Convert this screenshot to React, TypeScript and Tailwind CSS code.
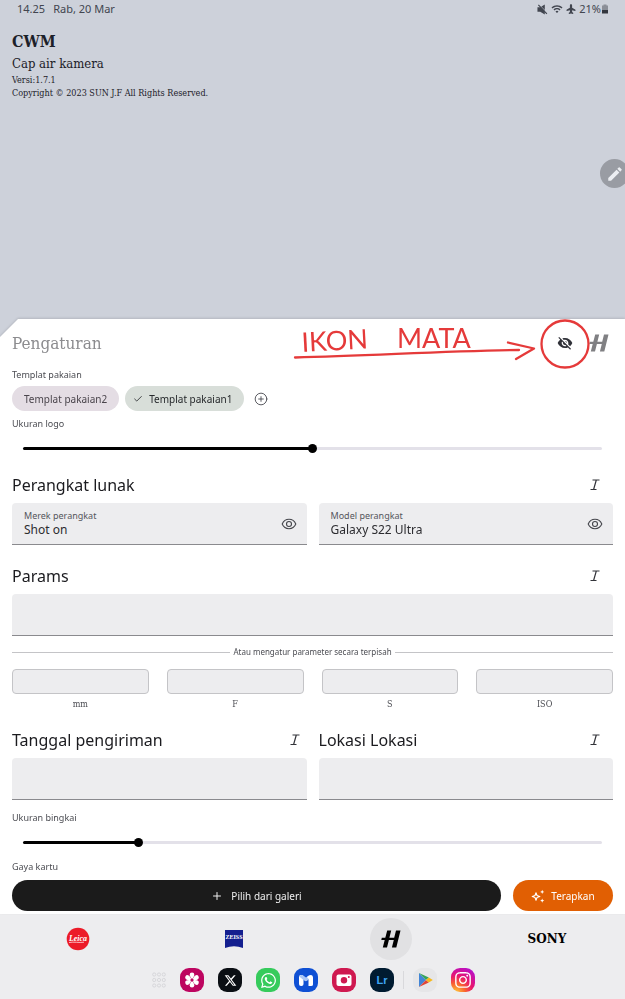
import { useState } from 'react';
import type { ReactNode } from 'react';
import { Check, CirclePlus, Plus } from 'lucide-react';
import { FaInstagram, FaPlane, FaWhatsapp, FaXTwitter } from 'react-icons/fa6';
import { MdModeEdit, MdVisibilityOff, MdWifi } from 'react-icons/md';

const templates = ['Templat pakaian2', 'Templat pakaian1'];

const params = ['mm', 'F', 'S', 'ISO'];

function EyeIcon() {
  return (
    <svg viewBox="0 0 16 16" className="w-4 h-4" fill="none" stroke="currentColor" strokeWidth="1.1">
      <path d="M1.2 8C2.5 5 5 3.3 8 3.3S13.500 5 14.800 8C13.500 11 11 12.700 8 12.700S2.500 11 1.200 8Z" />
      <circle cx="8" cy="8" r="2.500" />
    </svg>
  );
}

function ItalicIcon() {
  return (
    <svg viewBox="0 0 16 16" className="w-4 h-4" fill="none" stroke="currentColor" strokeWidth="1.2">
      <path d="M5.500 3h7M3.500 12.500h6M9.300 3L6.600 12.500" />
    </svg>
  );
}

function SparkleIcon() {
  return (
    <svg viewBox="0 0 14 14" className="w-3.5 h-3.5">
      <path
        d="M5 3.700L6 6.500L8.800 7.500L6 8.500L5 11.300L4 8.500L1.200 7.500L4 6.500Z"
        fill="none"
        stroke="currentColor"
        strokeWidth="1.1"
        strokeLinejoin="round"
      />
      <path
        d="M11.200 0.800L11.800 2.300L13.300 2.900L11.800 3.500L11.200 5L10.600 3.500L9.100 2.900L10.600 2.300ZM11.200 9.500L11.800 11L13.300 11.600L11.800 12.200L11.200 13.700L10.600 12.200L9.100 11.600L10.600 11Z"
        fill="currentColor"
      />
    </svg>
  );
}

function MuteIcon() {
  return (
    <svg viewBox="0 0 12 12" className="w-[11px] h-[11px]">
      <path d="M0.500 3.500H3.500L8.500 0.500V11.500L3.500 8.500H0.500Z" fill="currentColor" />
      <path d="M2.300 0.700L11.500 10" stroke="#cdd1da" strokeWidth="1" />
      <path d="M1.500 1L10.800 10.800" stroke="currentColor" strokeWidth="1.300" />
    </svg>
  );
}

function HasselbladLogo() {
  return (
    <svg viewBox="0 0 20 18" className="w-5 h-[18px]" fill="currentColor">
      <path d="M6.200 0.500H10.200L8.400 7.800H13.200L15 0.500H19.500L15.300 17.500H10.900L12.800 10H7.900L6 17.500H1.800L3.700 10H0.300L0.800 7.800H4.300Z" />
    </svg>
  );
}

function ItalicButton({ label, flush }: { label: string; flush?: boolean }) {
  return (
    <button
      aria-label={`Miring ${label}`}
      className={`w-6 h-6 flex items-center justify-center text-[#33343a] ${flush ? '' : 'mr-1.5'}`}
    >
      <ItalicIcon />
    </button>
  );
}

function SectionHeader({ id, children, flush }: { id: string; children: string; flush?: boolean }) {
  return (
    <div className="h-6 flex items-center justify-between">
      <h2 id={id} className="text-base leading-6 text-[#1b1b1f]">
        {children}
      </h2>
      <ItalicButton label={children} flush={flush} />
    </div>
  );
}

function DeviceField({ id, label, initial }: { id: string; label: string; initial: string }) {
  const [value, setValue] = useState(initial);

  return (
    <div className="h-[42px] flex items-center bg-[#ededef] border-b border-[#8a8a8e] rounded-t-sm pl-3">
      <div className="flex-1 min-w-0 flex flex-col">
        <label htmlFor={id} className="text-[9px] leading-3 text-[#55565c]">
          {label}
        </label>
        <input
          id={id}
          value={value}
          onChange={(e) => setValue(e.target.value)}
          className="w-full h-4 bg-transparent text-xs leading-4 text-[#2c2c30] outline-none"
        />
      </div>
      <button
        aria-label={`Tampilkan ${label}`}
        className="w-6 h-6 mr-1.5 flex items-center justify-center text-[#44454b]"
      >
        <EyeIcon />
      </button>
    </div>
  );
}

function TextField({ labelledBy }: { labelledBy: string }) {
  return (
    <input
      aria-labelledby={labelledBy}
      className="block w-full h-[42px] mt-1.5 px-3 bg-[#ededef] border-b border-[#8a8a8e] rounded-t-sm text-xs outline-none"
    />
  );
}

function SizeSlider({ id, label, initial }: { id: string; label: string; initial: number }) {
  const [value, setValue] = useState(initial);
  const percent = value / 2;

  return (
    <div>
      <label htmlFor={id} className="block text-[9px] leading-4 text-[#4b4c52]">
        {label}
      </label>
      <div className="h-4 mt-2 px-[11px] flex items-center">
        <input
          id={id}
          type="range"
          min={0}
          max={200}
          value={value}
          onChange={(e) => setValue(Number(e.target.value))}
          style={{ background: `linear-gradient(to right, #000 ${percent}%, #e3e1e9 ${percent}%)` }}
          className="w-full h-[3px] appearance-none rounded-full [&::-webkit-slider-thumb]:appearance-none [&::-webkit-slider-thumb]:w-[9px] [&::-webkit-slider-thumb]:h-[9px] [&::-webkit-slider-thumb]:rounded-full [&::-webkit-slider-thumb]:bg-black"
        />
      </div>
    </div>
  );
}

// red pen marks pointing at the eye icon
function PenNote() {
  return (
    <svg
      viewBox="0 0 345 60"
      className="absolute right-0 top-0 w-[345px] h-[60px] pointer-events-none"
      fill="none"
      stroke="#e53a3a"
      strokeWidth="2.300"
      strokeLinecap="round"
      strokeLinejoin="round"
    >
      <g fill="#e53a3a" stroke="none" className="font-['Lato',sans-serif] text-[27px]">
        <text x="22" y="33" transform="rotate(-3 22 33)">IKON</text>
        <text x="117" y="29">MATA</text>
      </g>
      <path d="M15 38.500C90 37 160 32 239 31" />
      <path d="M228 23.500L254 29.500L236 40" />
      <circle cx="285" cy="25" r="23.500" />
    </svg>
  );
}

function AppIcon({ name, className, children }: { name: string; className: string; children: ReactNode }) {
  return (
    <button
      aria-label={name}
      className={`w-6 h-6 rounded-[9px] flex items-center justify-center overflow-hidden ${className}`}
    >
      {children}
    </button>
  );
}

function StatusBar() {
  return (
    <div className="h-[18px] pl-[17px] pr-4 flex items-center justify-between text-[11px] leading-4 text-[#41454f]">
      <div className="flex gap-2">
        <span>14.25</span>
        <span>Rab, 20 Mar</span>
      </div>
      <div className="flex items-center gap-[3px]">
        <MuteIcon />
        <MdWifi className="w-3 h-3" />
        <FaPlane className="w-2.5 h-2.5 -rotate-90" />
        <span className="flex items-center">
          21%
          <svg viewBox="0 0 8 10" className="w-2 h-2.5">
            <path d="M2.500 0.500H5.500V1.500H7V6H1V1.500H2.500Z" fill="#8b8f98" />
            <path d="M1 6H7V9.500H1Z" fill="#33363e" />
          </svg>
        </span>
      </div>
    </div>
  );
}

function Taskbar() {
  return (
    <div className="flex items-center justify-center gap-3.5 pt-[5px] pb-[7px] pl-0.5">
      <button aria-label="Semua aplikasi">
        <svg viewBox="0 0 14 16" className="w-3.5 h-4" fill="none" stroke="#d2d2d5" strokeWidth="0.8">
          {[2.5, 8, 13.5].map((y) => (
            <g key={y}>
              <circle cx="2.200" cy={y} r="1.600" />
              <circle cx="7" cy={y} r="1.600" />
              <circle cx="11.800" cy={y} r="1.600" />
            </g>
          ))}
        </svg>
      </button>
      <AppIcon name="Galeri" className="bg-[#bd0560]">
        <svg viewBox="0 0 24 24" className="w-6 h-6" fill="#fff">
          {[0, 60, 120, 180, 240, 300].map((angle) => (
            <path
              key={angle}
              d="M12 11.500C10.500 9.500 9.700 8 9.700 6.800A2.300 2.300 0 0 1 14.300 6.800C14.300 8 13.500 9.500 12 11.500Z"
              transform={`rotate(${angle} 12 12)`}
            />
          ))}
          <circle cx="12" cy="12" r="1.600" fill="#bd0560" />
        </svg>
      </AppIcon>
      <AppIcon name="X" className="bg-[#0b0f14] text-white">
        <FaXTwitter className="w-[13px] h-[13px]" />
      </AppIcon>
      <AppIcon name="WhatsApp" className="bg-[#36cb5c] text-white">
        <FaWhatsapp className="w-[17px] h-[17px]" />
      </AppIcon>
      <AppIcon name="Samsung Members" className="bg-[#0f50d4]">
        <svg viewBox="0 0 24 24" className="w-6 h-6">
          <rect x="5" y="7" width="4.500" height="11" rx="2" fill="#fff" />
          <path d="M5.200 8.500Q6 6.500 8.500 7L12 9.500L15.500 7L14.500 11.500Q12 14.500 9.500 12Z" fill="#a9c6f7" />
          <path d="M14.500 18V11L13 9L15.500 7.200Q19 6 19 9.500V16.500Q19 18 17 18Z" fill="#fff" />
        </svg>
      </AppIcon>
      <AppIcon name="Kamera" className="bg-[#cf1950]">
        <svg viewBox="0 0 24 24" className="w-6 h-6">
          <rect x="4.500" y="6.500" width="15" height="11.500" rx="2" fill="#fff" />
          <circle cx="12" cy="12.200" r="3.200" fill="#cf1950" />
          <circle cx="16.800" cy="9" r="1" fill="#cf1950" />
        </svg>
      </AppIcon>
      <AppIcon name="Lightroom" className="bg-[#001b31] text-[#3ea6f5]">
        <span className="font-['Liberation_Sans',sans-serif] font-bold text-[11px] leading-4">Lr</span>
      </AppIcon>
      <div className="w-px h-[18px] -mx-[5px] bg-[#d9d9dc]" />
      <AppIcon name="Play Store" className="bg-[#e6e6e8]">
        <svg viewBox="0 0 24 24" className="w-6 h-6">
          <path d="M6 5V19L13 12Z" fill="#4285d6" />
          <path d="M6 5L13 12L15.800 9.500Z" fill="#35a35a" />
          <path d="M6 19L13 12L15.800 14.500Z" fill="#e04536" />
          <path d="M15.800 9.500L19.800 12L15.800 14.500L13 12Z" fill="#f7b81a" />
        </svg>
      </AppIcon>
      <AppIcon
        name="Instagram"
        className="bg-[radial-gradient(circle_at_20%_105%,#ffd23d_0%,#f9652f_30%,#e8156f_55%,#b40fd0_90%)] text-white"
      >
        <FaInstagram className="w-[18px] h-[18px]" />
      </AppIcon>
    </div>
  );
}

export default function App() {
  const [template, setTemplate] = useState('Templat pakaian1');

  return (
    <div className="relative min-h-screen flex flex-col overflow-hidden bg-[#cdd1da] font-['Noto_Sans',sans-serif]">
      <header className="flex-1">
        <StatusBar />
        <div className="px-3 pt-3 pb-16 font-['DejaVu_Serif_Condensed','DejaVu_Serif',serif] text-[#1c2028]">
          <h1 className="text-base leading-6 font-bold">CWM</h1>
          <p className="text-[13px] leading-5">Cap air kamera</p>
          <p className="text-[9px] leading-3">Versi:1.7.1</p>
          <p className="text-[9px] leading-[14px]">Copyright © 2023 SUN J.F All Rights Reserved.</p>
        </div>
      </header>

      <button
        aria-label="Edit"
        className="absolute top-[159px] -right-1 w-[29px] h-[29px] rounded-full bg-[#999ca3] text-[#eceef2] flex items-center justify-center"
      >
        <MdModeEdit className="w-[18px] h-[18px]" />
      </button>

      <div className="drop-shadow-[0_-1px_1px_rgba(0,0,0,0.12)]">
        <main className="bg-white px-3 pb-[3px] [clip-path:polygon(18px_0,100%_0,100%_100%,0_100%,0_18px)]">
          <div className="relative h-12 -mx-3 pl-3 pr-4 flex items-center justify-between">
            <h2 className="font-['DejaVu_Serif_Condensed','DejaVu_Serif',serif] text-[17px] leading-6 text-[#8c8c8f]">
              Pengaturan
            </h2>
            <div className="flex items-center gap-4">
              <button aria-label="Sembunyikan logo" className="text-[#303138]">
                <MdVisibilityOff className="w-4 h-4" />
              </button>
              <span className="text-[#808083]">
                <HasselbladLogo />
              </span>
            </div>
            <PenNote />
          </div>

          <p className="text-[9px] leading-4 text-[#4b4c52]">Templat pakaian</p>
          <div className="flex items-center gap-1.5 mt-[3px] mb-[5px]">
            {templates.map((name) => (
              <button
                key={name}
                onClick={() => setTemplate(name)}
                className={`h-[25px] pr-3 rounded-full flex items-center gap-1.5 text-[10px] leading-4 ${
                  template === name ? 'pl-2 bg-[#d8ded9] text-[#25282b]' : 'pl-3 bg-[#e4dde4] text-[#4a454c]'
                }`}
              >
                {template === name && <Check className="w-2.5 h-2.5" />}
                {name}
              </button>
            ))}
            <button aria-label="Tambah templat" className="ml-1 text-[#44454b]">
              <CirclePlus className="w-3.5 h-3.5" strokeWidth={1.5} />
            </button>
          </div>

          <SizeSlider id="logo-size" label="Ukuran logo" initial={100} />

          <section className="mt-[17px]">
            <SectionHeader id="software">Perangkat lunak</SectionHeader>
            <div className="grid grid-cols-2 gap-3 mt-1.5">
              <DeviceField id="brand" label="Merek perangkat" initial="Shot on" />
              <DeviceField id="model" label="Model perangkat" initial="Galaxy S22 Ultra" />
            </div>
          </section>

          <section className="mt-[19px]">
            <SectionHeader id="params">Params</SectionHeader>
            <TextField labelledBy="params" />
            <div className="flex items-center gap-[3px] h-4 mt-2">
              <div className="flex-1 h-px bg-[#c4c4c7]" />
              <span className="text-[8px] leading-4 text-[#4b4c52]">Atau mengatur parameter secara terpisah</span>
              <div className="flex-1 h-px bg-[#c4c4c7]" />
            </div>
            <div className="grid grid-cols-4 gap-[18px] mt-[9px]">
              {params.map((name) => (
                <div key={name} className="flex flex-col items-center gap-0.5">
                  <input
                    id={`param-${name}`}
                    className="w-full h-[25px] px-2 bg-[#ededef] border border-[#c4c4c7] rounded-sm text-[10px] outline-none"
                  />
                  <label
                    htmlFor={`param-${name}`}
                    className="font-['DejaVu_Serif_Condensed','DejaVu_Serif',serif] text-[9px] leading-4 text-[#4b4c52]"
                  >
                    {name}
                  </label>
                </div>
              ))}
            </div>
          </section>

          <div className="grid grid-cols-2 gap-3 mt-4 mb-2.5">
            <section>
              <SectionHeader id="date" flush>
                Tanggal pengiriman
              </SectionHeader>
              <TextField labelledBy="date" />
            </section>
            <section>
              <SectionHeader id="location">Lokasi Lokasi</SectionHeader>
              <TextField labelledBy="location" />
            </section>
          </div>

          <SizeSlider id="frame-size" label="Ukuran bingkai" initial={39} />

          <p className="mt-[9px] text-[9px] leading-4 text-[#4b4c52]">Gaya kartu</p>
          <div className="flex gap-3 mt-[5px]">
            <button className="flex-1 h-[31px] rounded-full bg-[#1b1b1b] text-[#f0f0f0] text-[10px] leading-4 flex items-center justify-center gap-2">
              <Plus className="w-3 h-3" />
              Pilih dari galeri
            </button>
            <button className="w-[100px] h-[31px] rounded-full bg-[#e15f03] text-white text-[10px] leading-4 flex items-center justify-center gap-1.5">
              <SparkleIcon />
              Terapkan
            </button>
          </div>
        </main>
      </div>

      <footer className="bg-[#ededef]">
        <nav className="grid grid-cols-4 h-[49px] items-center justify-items-center">
          <button aria-label="Leica">
            <svg viewBox="0 0 24 24" className="w-6 h-6">
              <circle cx="12" cy="12" r="11.300" fill="#ec1b28" />
              <text
                x="12"
                y="14"
                textAnchor="middle"
                fill="#fff"
                className="font-['Liberation_Serif',serif] text-[8px] font-bold italic"
              >
                Leica
              </text>
              <path d="M3 15.500C8 14.500 13 16 18 15.200" fill="none" stroke="#fff" strokeWidth="0.700" />
            </svg>
          </button>
          <button aria-label="Zeiss">
            <svg viewBox="0 0 18 18" className="w-[18px] h-[18px]">
              <path d="M0 0H18V18Q9 14.500 0 18Z" fill="#141f8f" />
              <text
                x="9"
                y="9"
                textAnchor="middle"
                fill="#fff"
                className="font-['Liberation_Serif',serif] text-[6px] font-bold"
              >
                ZEISS
              </text>
            </svg>
          </button>
          <button
            aria-label="Hasselblad"
            className="w-[42px] h-[42px] rounded-full bg-[#e1e1e3] text-black flex items-center justify-center"
          >
            <HasselbladLogo />
          </button>
          <button className="font-['DejaVu_Serif',serif] font-bold text-xs leading-4 text-black">SONY</button>
        </nav>
        <Taskbar />
      </footer>
    </div>
  );
}
